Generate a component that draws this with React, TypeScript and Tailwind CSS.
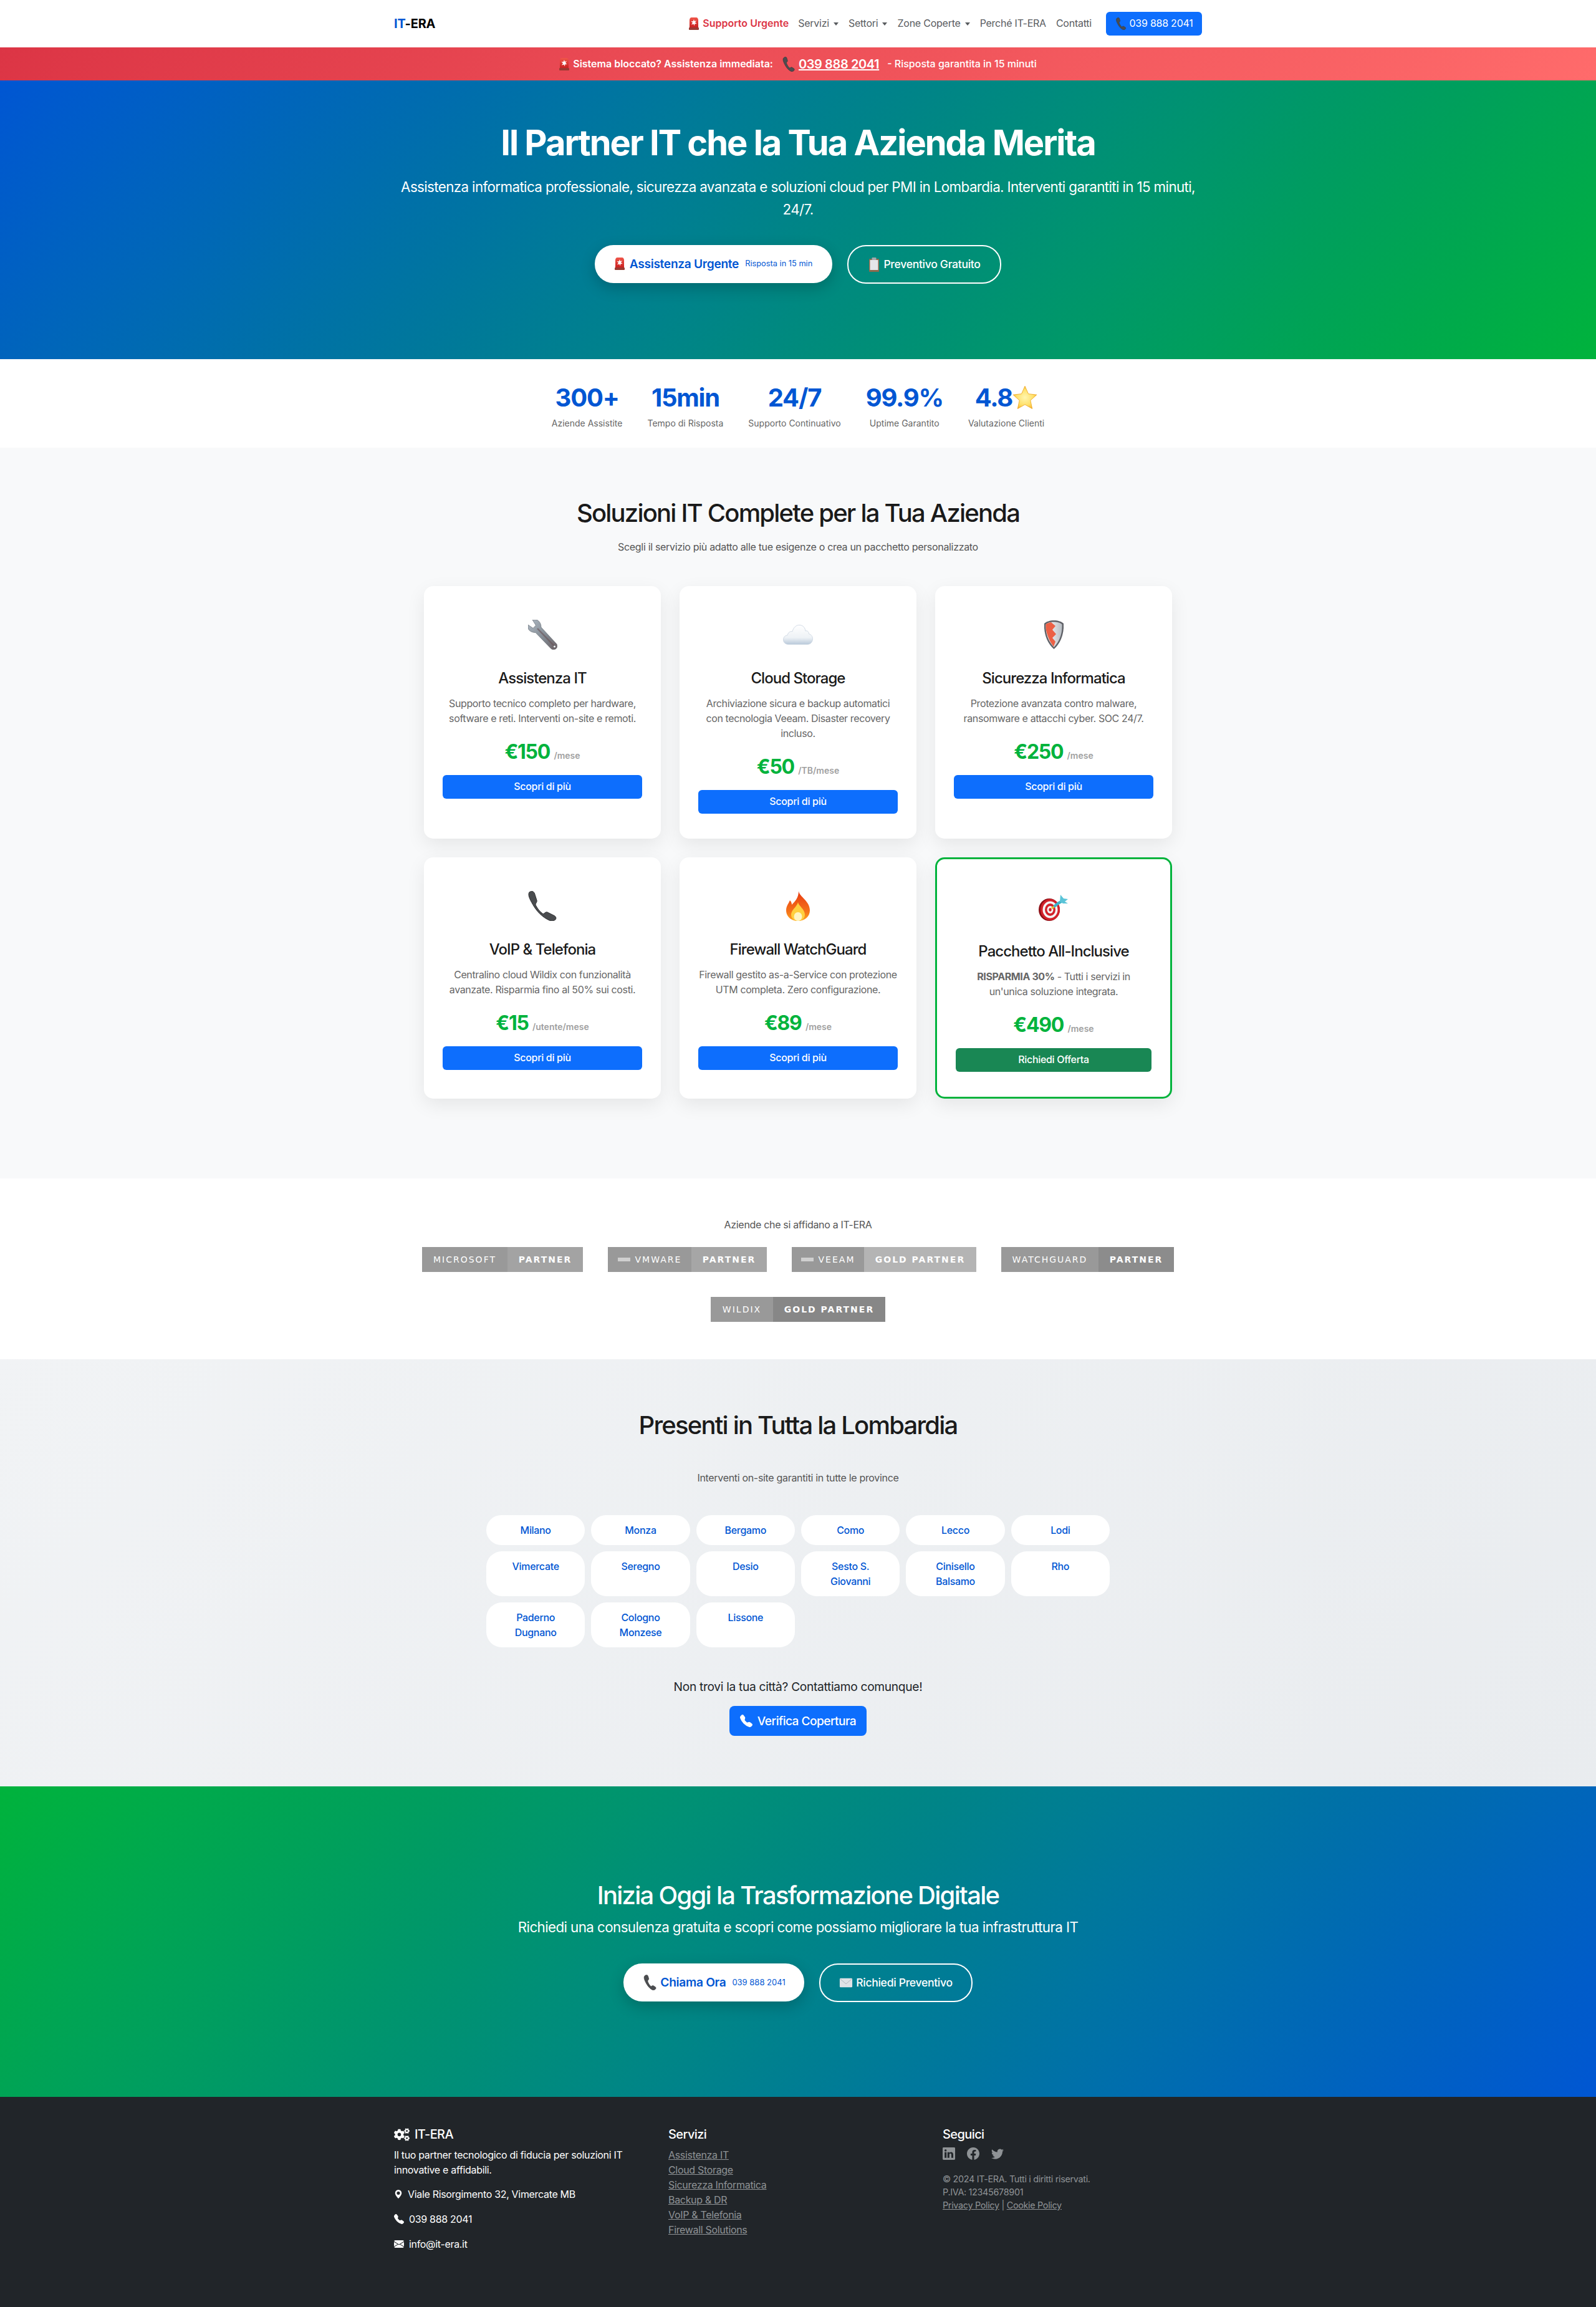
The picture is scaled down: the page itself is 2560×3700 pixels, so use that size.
import { BsTelephoneFill, BsGeoAltFill, BsEnvelopeFill, BsLinkedin, BsFacebook, BsTwitter } from "react-icons/bs";
import { FaCogs } from "react-icons/fa";

const SirenEmoji = () => (
  <svg width="16" height="20" viewBox="0 0 16 20" className="inline-block shrink-0">
    <defs>
      <linearGradient id="siren" x1="0" y1="0" x2="0" y2="1">
        <stop offset="0" stopColor="#f0564a" />
        <stop offset="1" stopColor="#c81e1e" />
      </linearGradient>
    </defs>
    <path d="M1 4c0-2 1.500-4 3-4h8c1.500 0 3 2 3 4v13H1z" fill="url(#siren)" />
    <path d="M8 3l1 3 3-1-2 3 2.500 2-3.200.2L9 13.500 7.500 10.500 4 11.500 6 8.500 3.500 6l3.200.200z" fill="#fff" />
    <rect x="0" y="16" width="16" height="4" rx="1" fill="#9a3a32" />
  </svg>
);

const PhoneEmoji = ({ size = 20 }: { size?: number }) => (
  <svg width={size} height={size} viewBox="0 0 24 24" className="inline-block shrink-0">
    <path d="M5 1c2-1.300 3.600-.5 4.200 1.500l1 3.500c.3 1.200-.4 2-1.300 2.800-.5.400-.5 1-.2 1.800.9 2.500 2.300 5 4.300 7 .5.500 1 .500 1.500.100 1-.8 1.900-1.200 2.800-.7l2.700 1.600c1.500.9 1.600 2.300.6 3.500-1.200 1.500-3 2-4.800 1.300-3.300-1.400-6.500-4.700-9-9C4.400 10 2.700 6.500 3 4c.1-1.300.9-2.300 2-3z" fill="#4b4d50" stroke="#2c2d2f" strokeWidth="0.5" />
  </svg>
);

const ClipboardEmoji = () => (
  <svg width="20" height="24" viewBox="0 0 20 24" className="inline-block shrink-0">
    <rect x="2" y="3" width="16" height="21" rx="1" fill="#8b6a4c" />
    <rect x="3.500" y="5" width="13" height="16" fill="#e4e6e9" />
    <rect x="6.500" y="1" width="7" height="4" rx="1" fill="#a3a8ad" />
  </svg>
);

const EnvelopeEmoji = () => (
  <svg width="22" height="22" viewBox="0 0 24 24" className="inline-block shrink-0">
    <rect x="1" y="4" width="22" height="16" rx="1.500" fill="#dfe2e6" />
    <path d="M1.500 5l10.500 9 10.500-9" fill="none" stroke="#aeb3b9" strokeWidth="1" />
  </svg>
);

const StarEmoji = () => (
  <svg width="40" height="40" viewBox="0 0 24 24" className="shrink-0">
    <defs>
      <radialGradient id="star" cx="0.500" cy="0.500" r="0.600">
        <stop offset="0" stopColor="#fff6b0" />
        <stop offset="0.600" stopColor="#ffe069" />
        <stop offset="1" stopColor="#f5a81c" />
      </radialGradient>
    </defs>
    <path d="M12 .800l3.300 7.400 8 .9-6 5.400 1.700 8L12 18.500l-7 4 1.700-8-6-5.400 8-.9z" fill="url(#star)" stroke="#eda51e" strokeWidth="0.5" strokeLinejoin="round" />
  </svg>
);

const WrenchEmoji = () => (
  <svg width="47" height="48" viewBox="0 0 47 48">
    <defs>
      <linearGradient id="wrench" x1="0" y1="0" x2="1" y2="1">
        <stop offset="0" stopColor="#aeb8c2" />
        <stop offset="0.600" stopColor="#808890" />
        <stop offset="1" stopColor="#6d5f63" />
      </linearGradient>
    </defs>
    <path d="M7 0l8 .5c4 2.500 6 6.500 6 11.500l25 27c1.500 3.500.5 6.500-2 8-2.500 1.200-5.500 1-7.500-1L12 20.500C6 20.500 2 18 0 14V8l8 5.500L12.500 9z" fill="url(#wrench)" stroke="#5e646b" strokeWidth="0.6" />
    <path d="M15 14l27 28" stroke="#6a5458" strokeWidth="2.500" opacity="0.6" />
    <circle cx="42.500" cy="43" r="1.800" fill="#fff" stroke="#5e646b" strokeWidth="0.6" />
  </svg>
);

const CloudEmoji = () => (
  <svg width="48" height="32" viewBox="0 0 48 32">
    <defs>
      <linearGradient id="cloud" x1="0" y1="0" x2="0" y2="1">
        <stop offset="0" stopColor="#ffffff" />
        <stop offset="0.650" stopColor="#eef2f6" />
        <stop offset="1" stopColor="#b9c9da" />
      </linearGradient>
    </defs>
    <path d="M9 31.500c-5 0-8.500-3-8.500-7.500 0-4 2.500-6.800 6.500-7.200C8 12.500 11.500 10 15 10.800 16.500 4.500 21 .5 26 .5c5.500 0 9.500 4 10 9.500 1.500-.5 3-.2 4 .8 1 1 1.500 2.300 1.300 3.700 3.700 1 6.200 4 6.200 8 0 5-3.500 9-8.500 9z" fill="url(#cloud)" stroke="#c8d3df" strokeWidth="0.8" />
  </svg>
);

const ShieldEmoji = () => (
  <svg width="31" height="46" viewBox="0 0 31 46">
    <defs>
      <linearGradient id="shieldRight" x1="0" y1="0" x2="1" y2="0">
        <stop offset="0" stopColor="#ffffff" />
        <stop offset="1" stopColor="#b9bec4" />
      </linearGradient>
    </defs>
    <path d="M15.500 0C22 0 28 2 31 5c1 15-4 31-15.500 41C4 36-1 20 0 5c3-3 9-5 15.500-5z" fill="#5f6167" />
    <path d="M15.500 2.500C21 2.500 26 4 28.500 6.300c.7 13.700-3.500 27-13 36.700C6 33.300 1.800 20 2.500 6.300 5 4 10 2.500 15.500 2.500z" fill="url(#shieldRight)" />
    <path d="M11 3l7 6-5 6 6 7-6 6 5 6-3 8C8 33 1.800 20 2.500 6.300 4.800 4.500 8 3.500 11 3z" fill="#ec6045" />
  </svg>
);

const PhoneBigEmoji = () => (
  <svg width="48" height="48" viewBox="0 0 48 48">
    <path d="M3 2c3-2.500 7-2 8.500 2l3.500 11c.6 2-.6 3.500-1.500 5-.6 1-.5 2 .2 3.400 2.500 5 6 9.300 10.300 12.600 1 .8 2 .6 3-.2 1.500-1.300 3-2.500 5-1.800l11 5.500c3.500 2 3.500 5 1.500 6.800-2.500 2-6 2.200-9.500.7C24 42 15 33 8.500 21.500 4 13.500 0 6 3 2z" fill="#4a4c4f" stroke="#2e2f31" strokeWidth="1" />
  </svg>
);

const FireEmoji = () => (
  <svg width="38" height="48" viewBox="0 0 38 48">
    <defs>
      <linearGradient id="fire" x1="0" y1="0" x2="0" y2="1">
        <stop offset="0" stopColor="#e83a12" />
        <stop offset="0.700" stopColor="#f5741a" />
        <stop offset="1" stopColor="#ffa51f" />
      </linearGradient>
    </defs>
    <path d="M20 0c1 9 18 16 18 31 0 10-8 17-19 17S0 41 0 31c0-7 4-11 6-16 2 2 3 4 3 7 5-5 11-11 11-22z" fill="url(#fire)" />
    <path d="M19 18c1 6 11 11 11 20 0 6-5 10-11 10S8 44 8 38c0-8 9-12 11-20z" fill="#ffcf3f" />
    <ellipse cx="19" cy="41" rx="6.500" ry="7" fill="#fff4c2" />
  </svg>
);

const TargetEmoji = () => (
  <svg width="48" height="42" viewBox="0 0 48 42">
    <ellipse cx="17" cy="24" rx="17" ry="18" fill="#8f0f16" />
    <ellipse cx="18.500" cy="24" rx="15.500" ry="17" fill="#d3222a" />
    <ellipse cx="18.500" cy="24" rx="12" ry="13.500" fill="#f5f5f5" />
    <ellipse cx="18.500" cy="24" rx="8.500" ry="10" fill="#d3222a" />
    <ellipse cx="18.500" cy="24" rx="5" ry="6" fill="#f5f5f5" />
    <ellipse cx="18.500" cy="24" rx="2.200" ry="2.800" fill="#d3222a" />
    <path d="M21 22l6-5" stroke="#e5c32e" strokeWidth="3" />
    <path d="M26 18c3-3 6-5 10-7" stroke="#3fb2c9" strokeWidth="4.500" strokeLinecap="round" />
    <path d="M34 11l1-11 5 6 7 1-5 4 5 3-8 0z" fill="#5ac4d8" />
  </svg>
);

const services = [
  { icon: <WrenchEmoji />, title: "Assistenza IT", text: "Supporto tecnico completo per hardware, software e reti. Interventi on-site e remoti.", price: "€150", unit: "/mese" },
  { icon: <CloudEmoji />, title: "Cloud Storage", text: "Archiviazione sicura e backup automatici con tecnologia Veeam. Disaster recovery incluso.", price: "€50", unit: "/TB/mese" },
  { icon: <ShieldEmoji />, title: "Sicurezza Informatica", text: "Protezione avanzata contro malware, ransomware e attacchi cyber. SOC 24/7.", price: "€250", unit: "/mese" },
  { icon: <PhoneBigEmoji />, title: "VoIP & Telefonia", text: "Centralino cloud Wildix con funzionalità avanzate. Risparmia fino al 50% sui costi.", price: "€15", unit: "/utente/mese" },
  { icon: <FireEmoji />, title: "Firewall WatchGuard", text: "Firewall gestito as-a-Service con protezione UTM completa. Zero configurazione.", price: "€89", unit: "/mese" },
];

const stats = [
  { value: "300+", label: "Aziende Assistite" },
  { value: "15min", label: "Tempo di Risposta" },
  { value: "24/7", label: "Supporto Continuativo" },
  { value: "99.9%", label: "Uptime Garantito" },
];

const cities = [
  "Milano", "Monza", "Bergamo", "Como", "Lecco", "Lodi",
  "Vimercate", "Seregno", "Desio", "Sesto S. Giovanni", "Cinisello Balsamo", "Rho",
  "Paderno Dugnano", "Cologno Monzese", "Lissone",
];

const footerLinks = ["Assistenza IT", "Cloud Storage", "Sicurezza Informatica", "Backup & DR", "VoIP & Telefonia", "Firewall Solutions"];

const Caret = () => (
  <span className="ml-[7px] inline-block border-x-[4px] border-t-[5px] border-x-transparent border-t-[#595c5f] align-middle" />
);

const Badge = ({ name, label, leftW, rightW, right, mark }: { name: string; label: string; leftW: string; rightW: string; right: string; mark?: boolean }) => (
  <div className="flex h-10 font-['DejaVu_Sans',sans-serif] text-[14px] tracking-[2px] text-white">
    <div className={`flex items-center justify-center gap-2 bg-[#999999] ${leftW}`}>
      {mark && <span className="h-[6px] w-[20px] bg-[#cfcfcf]" />}
      {name}
    </div>
    <div className={`flex items-center justify-center font-bold ${rightW} ${right}`}>{label}</div>
  </div>
);

const App = () => {
  return (
    <div className="flex min-h-[3700px] flex-col bg-white font-['Inter',sans-serif] text-[16px] leading-[1.6] tracking-[-0.02em] text-[#212529]">
      <nav className="h-[76px] bg-white">
        <div className="mx-auto flex h-full w-[1320px] items-center justify-between px-3">
          <div className="text-[20px] font-bold tracking-[-0.01em] text-black">
            <span className="text-[#0056d3]">IT</span>-ERA
          </div>
          <div className="flex items-center text-[16px] tracking-[-0.015em] text-[#595c5f]">
            <a className="mr-[15px] flex items-center gap-[6px] font-semibold tracking-normal text-[#dc3545]"><SirenEmoji />Supporto Urgente</a>
            <a className="mr-4">Servizi<Caret /></a>
            <a className="mr-4">Settori<Caret /></a>
            <a className="mr-4">Zone Coperte<Caret /></a>
            <a className="mr-4">Perché IT-ERA</a>
            <a className="mr-[23px]">Contatti</a>
            <a className="flex h-[38px] w-[154px] items-center justify-center gap-[3px] rounded-md bg-[#0d6efd] text-white"><PhoneEmoji />039 888 2041</a>
          </div>
        </div>
      </nav>

      <div className="flex h-[53px] items-center justify-center gap-[13px] bg-[linear-gradient(135deg,#dc3545,#ff6b6b)] text-[16px] tracking-normal text-white">
        <span className="flex items-center gap-[6px] font-semibold"><SirenEmoji />Sistema bloccato? Assistenza immediata:</span>
        <a className="flex items-center gap-[4px] text-[20px] font-semibold tracking-[-0.02em] underline"><PhoneEmoji size={24} />039 888 2041</a>
        <span className="font-medium">- Risposta garantita in 15 minuti</span>
      </div>

      <section className="flex h-[447px] flex-col items-center bg-[linear-gradient(135deg,#0056d3,#00b33c)] pt-[64px] text-center text-white">
        <h1 className="text-[56px] leading-[72px] font-bold tracking-[-0.036em]">Il Partner IT che la Tua Azienda Merita</h1>
        <p className="mt-[17px] w-[1296px] text-[22.4px] tracking-[-0.028em]">Assistenza informatica professionale, sicurezza avanzata e soluzioni cloud per PMI in Lombardia. Interventi garantiti in 15 minuti, 24/7.</p>
        <div className="mt-[39px] flex gap-6">
          <a className="flex h-[61px] w-[381px] items-center justify-center gap-2 rounded-[30px] bg-white text-[#0056d3] shadow-[0_8px_25px_rgba(0,0,0,0.2)]">
            <SirenEmoji />
            <span className="text-[19.2px] font-semibold">Assistenza Urgente</span>
            <span className="ml-[2px] text-[12.8px] tracking-normal">Risposta in 15 min</span>
          </a>
          <a className="flex h-[62px] w-[247px] items-center justify-center gap-[5px] rounded-[30px] border-2 border-white text-[17.6px] font-medium text-white">
            <ClipboardEmoji />Preventivo Gratuito
          </a>
        </div>
      </section>

      <section className="flex h-[142px] justify-center gap-10 bg-white pt-[30px] text-center">
        {stats.map((s) => (
          <div key={s.label}>
            <div className="text-[40px] leading-[64px] font-bold tracking-[-0.03em] text-[#0056d3]">{s.value}</div>
            <div className="text-[14px] leading-[18px] tracking-normal text-[#666666]">{s.label}</div>
          </div>
        ))}
        <div>
          <div className="flex items-center justify-center text-[40px] leading-[64px] font-bold tracking-[-0.03em] text-[#0056d3]">4.8<StarEmoji /></div>
          <div className="text-[14px] leading-[18px] tracking-normal text-[#666666]">Valutazione Clienti</div>
        </div>
      </section>

      <section className="h-[1172px] bg-[#f8f9fa] pt-[73px] text-center">
        <h2 className="text-[40px] leading-[64px] font-medium tracking-[-0.045em] text-[#1a1a1a]">Soluzioni IT Complete per la Tua Azienda</h2>
        <p className="mt-[10px] text-[16px] text-[#555555]">Scegli il servizio più adatto alle tue esigenze o crea un pacchetto personalizzato</p>
        <div className="mx-auto mt-[49px] grid w-[1200px] grid-cols-3 gap-[30px]">
          {services.map((s) => (
            <div key={s.title} className="rounded-[15px] bg-white px-[30px] py-[40px] shadow-[0_10px_30px_rgba(0,0,0,0.08)]">
              <div className="flex h-[77px] items-center justify-center">{s.icon}</div>
              <h3 className="mt-[17px] text-[24px] leading-[27px] font-medium tracking-[-0.04em] text-[#1a1a1a]">{s.title}</h3>
              <p className="mt-[15px] text-[16px] leading-[24px] tracking-[-0.024em] text-[#666666]">{s.text}</p>
              <div className="mt-[16px] mb-[12px] text-[32px] leading-[51px] font-bold tracking-[-0.04em] text-[#00b33c]">
                {s.price} <span className="text-[14px] leading-none font-semibold tracking-normal text-[#a0a0a0]">{s.unit}</span>
              </div>
              <a className="flex h-[38px] items-center justify-center rounded-md bg-[#0d6efd] font-medium text-white">Scopri di più</a>
            </div>
          ))}
          <div className="rounded-[15px] border-[3px] border-[#00b33c] bg-white px-[30px] py-[40px] shadow-[0_10px_30px_rgba(0,0,0,0.08)]">
            <div className="flex h-[77px] items-center justify-center"><TargetEmoji /></div>
            <h3 className="mt-[17px] text-[24px] leading-[27px] font-medium tracking-[-0.04em] text-[#1a1a1a]">Pacchetto All-Inclusive</h3>
            <p className="mt-[15px] text-[16px] leading-[24px] tracking-[-0.024em] text-[#666666]"><strong className="font-bold">RISPARMIA 30%</strong> - Tutti i servizi in<br />un'unica soluzione integrata.</p>
            <div className="mt-[16px] mb-[12px] text-[32px] leading-[51px] font-bold tracking-[-0.04em] text-[#00b33c]">
              €490 <span className="text-[14px] leading-none font-semibold tracking-normal text-[#a0a0a0]">/mese</span>
            </div>
            <a className="flex h-[38px] items-center justify-center rounded-md bg-[#198754] font-medium text-white">Richiedi Offerta</a>
          </div>
        </div>
      </section>

      <section className="h-[290px] bg-white pt-[62px] text-center">
        <p className="leading-[24px] text-[#555555]">Aziende che si affidano a IT-ERA</p>
        <div className="mt-[24px] flex justify-center gap-10">
          <Badge name="MICROSOFT" label="PARTNER" leftW="w-[137px]" rightW="w-[121px]" right="bg-[#a3a3a3]" />
          <Badge name="VMWARE" label="PARTNER" leftW="w-[134px]" rightW="w-[121px]" right="bg-[#a6a6a6]" mark />
          <Badge name="VEEAM" label="GOLD PARTNER" leftW="w-[116px]" rightW="w-[180px]" right="bg-[#b4b4b4]" mark />
          <Badge name="WATCHGUARD" label="PARTNER" leftW="w-[156px]" rightW="w-[121px]" right="bg-[#8c8c8c]" />
        </div>
        <div className="mt-[40px] flex justify-center">
          <Badge name="WILDIX" label="GOLD PARTNER" leftW="w-[100px]" rightW="w-[180px]" right="bg-[#878787]" />
        </div>
      </section>

      <section className="h-[685px] bg-[linear-gradient(135deg,#f1f3f5,#e9ecef)] pt-[74px] text-center">
        <h2 className="text-[40px] leading-[64px] font-medium tracking-[-0.045em] text-[#1a1a1a]">Presenti in Tutta la Lombardia</h2>
        <p className="mt-[40px] leading-[24px] text-[#555555]">Interventi on-site garantiti in tutte le province</p>
        <div className="mx-auto mt-[48px] grid w-[1000px] grid-cols-6 gap-[10px]">
          {cities.map((c) => (
            <div key={c} className="rounded-[25px] bg-white px-5 py-3 leading-[24px] font-medium text-[#0056d3]">{c}</div>
          ))}
        </div>
        <p className="mt-[48px] text-[19.2px] leading-[31px] text-[#212529]">Non trovi la tua città? Contattiamo comunque!</p>
        <a className="mt-[15px] inline-flex h-[48px] w-[220px] items-center justify-center gap-2 rounded-lg bg-[#0d6efd] text-[19.2px] font-medium tracking-[-0.03em] text-white">
          <BsTelephoneFill size={20} />Verifica Copertura
        </a>
      </section>

      <section className="flex h-[498px] flex-col items-center bg-[linear-gradient(135deg,#00b33c,#0056d3)] pt-[149px] text-center text-white">
        <h2 className="text-[40px] leading-[52px] font-medium tracking-[-0.043em]">Inizia Oggi la Trasformazione Digitale</h2>
        <p className="mt-[7px] text-[22.4px] leading-[36px] tracking-[-0.027em]">Richiedi una consulenza gratuita e scopri come possiamo migliorare la tua infrastruttura IT</p>
        <div className="mt-[40px] flex gap-6">
          <a className="flex h-[61px] w-[290px] items-center justify-center gap-[4px] rounded-[30px] bg-white text-[#0056d3] shadow-[0_8px_25px_rgba(0,0,0,0.2)]">
            <PhoneEmoji size={25} />
            <span className="text-[19.2px] font-semibold">Chiama Ora</span>
            <span className="ml-[6px] text-[13px] tracking-normal">039 888 2041</span>
          </a>
          <a className="flex h-[62px] w-[246px] items-center justify-center gap-[5px] rounded-[30px] border-2 border-white text-[17.6px] font-medium text-white">
            <EnvelopeEmoji />Richiedi Preventivo
          </a>
        </div>
      </section>

      <footer className="flex-1 bg-[#212529] pt-[45px] text-white">
        <div className="mx-auto grid w-[1320px] grid-cols-3">
          <div className="px-3">
            <h5 className="flex items-center gap-2 text-[20px] leading-[30px] font-medium tracking-[-0.03em]"><FaCogs size={25} />IT-ERA</h5>
            <p className="mt-[6px] leading-[24px]">Il tuo partner tecnologico di fiducia per soluzioni IT innovative e affidabili.</p>
            <p className="mt-[15px] flex items-center gap-2 leading-[24px]"><BsGeoAltFill size={14} />Viale Risorgimento 32, Vimercate MB</p>
            <p className="mt-[16px] flex items-center gap-[8px] leading-[24px]"><BsTelephoneFill size={16} />039 888 2041</p>
            <p className="mt-[16px] flex items-center gap-[8px] leading-[24px]"><BsEnvelopeFill size={16} />info@it-era.it</p>
          </div>
          <div className="px-3">
            <h5 className="text-[20px] leading-[30px] font-medium tracking-[-0.03em]">Servizi</h5>
            <ul className="mt-[6px] leading-[24px] text-[#8f9396]">
              {footerLinks.map((l) => (
                <li key={l}><a className="underline">{l}</a></li>
              ))}
            </ul>
          </div>
          <div className="px-3">
            <h5 className="text-[20px] leading-[30px] font-medium tracking-[-0.03em]">Seguici</h5>
            <div className="mt-[6px] flex gap-[19px] text-[#8f9396]">
              <BsLinkedin size={20} />
              <BsFacebook size={20} />
              <BsTwitter size={20} />
            </div>
            <div className="mt-[20px] text-[14.4px] leading-[21px] text-[#8f9396]">
              <p>© 2024 IT-ERA. Tutti i diritti riservati.</p>
              <p>P.IVA: 12345678901</p>
              <p><a className="underline">Privacy Policy</a> | <a className="underline">Cookie Policy</a></p>
            </div>
          </div>
        </div>
      </footer>
    </div>
  );
};

export default App;
